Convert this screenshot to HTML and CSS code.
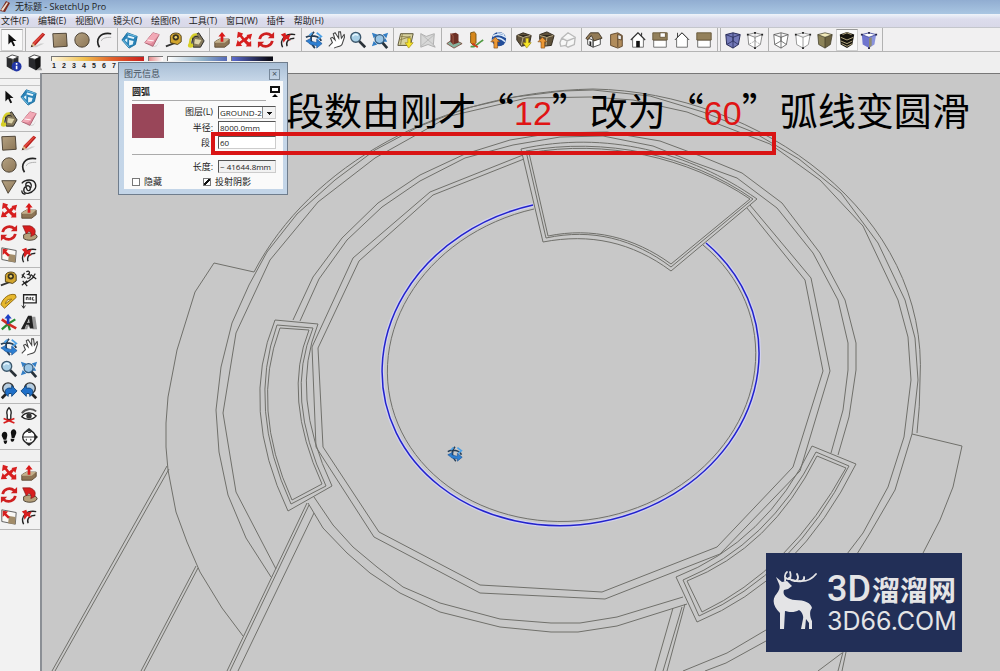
FILE: index.html
```html
<!DOCTYPE html>
<html lang="zh-CN">
<head>
<meta charset="utf-8">
<title>无标题 - SketchUp Pro</title>
<link rel="stylesheet" href="styles.css">
</head>
<body>
<svg class="defs" aria-hidden="true">
  <defs>
    <linearGradient id="skin" x1="0" y1="0" x2="1" y2="1"><stop offset="0" stop-color="#b5a283"/><stop offset="1" stop-color="#8c7656"/></linearGradient>
    <symbol id="i-arrow" viewBox="0 0 20 20"><path d="M6 3v12l3-3 2.500 5 2-1-2.500-5h4z" fill="#111"/></symbol>
    <symbol id="i-pencil" viewBox="0 0 20 20"><path d="M3 18l10-4 4 0-9 4z" fill="#ccc"/><path d="M2 18l2-5L15 2l3 2L7 16z" fill="#b81c1c"/><path d="M4.500 13L15.500 2.500l1 .7L6 15z" fill="#e04a3e"/><path d="M2 18l2-5 3 3z" fill="#dbb583"/><path d="M2 18l1-2.500 1.500 1.500z" fill="#222"/></symbol>
    <symbol id="i-rect" viewBox="0 0 20 20"><path d="M2 3l15-.5 1 14.500-15 1z" fill="url(#skin)" stroke="#443a2c"/></symbol>
    <symbol id="i-circle" viewBox="0 0 20 20"><circle cx="10" cy="10" r="8" fill="url(#skin)" stroke="#443a2c"/></symbol>
    <symbol id="i-arc" viewBox="0 0 20 20"><path d="M5 18C0 10 5 1 18 3" fill="none" stroke="#222" stroke-width="1.800"/><path d="M7 11C8 8 12 7 18 7" fill="none" stroke="#aaa"/></symbol>
    <symbol id="i-poly" viewBox="0 0 20 20"><path d="M2 3h16l-9 14z" fill="url(#skin)" stroke="#443a2c"/></symbol>
    <symbol id="i-free" viewBox="0 0 20 20"><path d="M2 6C6 1 15 1 17 6s-2 10-8 11-6-6-2-8 6 4 3 5-5-8-2-9 6 2 4 6M2 14c0 3 2 4 4 4" fill="none" stroke="#222" stroke-width="1.500"/></symbol>
    <symbol id="i-comp" viewBox="0 0 20 20"><path d="M7 2l11 4-2 9-7 4-8-9z" fill="#2a83b8" stroke="#176b9c"/><path d="M8 5l7 2-1 2-7-2zM4 10l3-2 0 5zM9 10l5 1-1 4-4 1z" fill="#e6f5fb"/><path d="M2 10l7 8M7 3l10 3" stroke="#7cc8ea"/></symbol>
    <symbol id="i-erase" viewBox="0 0 20 20"><path d="M7 18l8-2 4-6-4 7z" fill="#bbb"/><path d="M2 13L11 2l7 2-7 13z" fill="#e08a9b" stroke="#a85c6c"/><path d="M2 13l7 1 9-10-7-2z" fill="#f2a9b6"/><path d="M5 10l7 1" stroke="#fff"/></symbol>
    <symbol id="i-tape" viewBox="0 0 20 20"><path d="M1 17l11-4" stroke="#333" stroke-width="2"/><path d="M6 13V6c1-5 11-5 12 0v6l-4 3z" fill="#d2a52e" stroke="#4a3a12"/><circle cx="12" cy="7" r="3.500" fill="#3b3420"/><circle cx="12" cy="7" r="1.500" fill="#eed36a"/></symbol>
    <symbol id="i-paint" viewBox="0 0 20 20"><path d="M6 6l7-4 6 9-4 7H7z" fill="#85795b" stroke="#222"/><path d="M9 9l7 1-3 5-5-1z" fill="#ddd4aa"/><path d="M3 15C3 7 7 3 11 4" stroke="#d6cf28" stroke-width="2.500" fill="none"/><path d="M5 16C5 8 9 4 13 7" stroke="#222" fill="none"/><ellipse cx="4" cy="16" rx="3" ry="2.500" fill="#d6cf28"/></symbol>
    <symbol id="i-push" viewBox="0 0 20 20"><path d="M2 12l5-3h11v5l-5 4H2z" fill="#8d7454" stroke="#5a4832"/><path d="M2 12l5-3h11l-5 4H2z" fill="#c3b08c"/><path d="M10 1l4 5h-2.500v6h-3V6H6z" fill="#d91a1a"/></symbol>
    <symbol id="i-move" viewBox="0 0 20 20"><path d="M2 2l6 1-1 2 3 3 3-3-1-1 6-2-1 7-2-2-2 3 3 2 2-2 1 6-6 1 1-2-4-3-3 3 2 2-7 1 1-7 2 2 3-3-3-3-3 2z" fill="#d71e1e" transform="rotate(8 10 10)"/></symbol>
    <symbol id="i-rot" viewBox="0 0 20 20"><path d="M3 9c1-6 8-8 13-4M17 11c-1 6-8 8-13 4" fill="none" stroke="#cf2020" stroke-width="3"/><path d="M19 1v7h-7zM1 19v-7h7z" fill="#cf2020"/></symbol>
    <symbol id="i-offset" viewBox="0 0 20 20"><path d="M4 18C0 10 7 2 18 4M9 17c-2-5 2-9 8-9" fill="none" stroke="#222" stroke-width="1.500"/><path d="M2 4l5-2 1 3 5-1-2 4 2 3-5-2-3 4-1-4 1-2z" fill="#d71e1e"/></symbol>
    <symbol id="i-follow" viewBox="0 0 20 20"><path d="M4 12c4-3 14-3 15 2-1 5-12 5-15 2z" fill="#b5a07a" stroke="#443a2c"/><path d="M3 2l8 0c6 2 7 6 5 10l-4 2c1-4 0-5-2-6L7 11z" fill="#d71e1e" stroke="#7c1515" stroke-width=".7"/></symbol>
    <symbol id="i-scale" viewBox="0 0 20 20"><path d="M2 2l16 3-1 13-15-3z" fill="#faf8f5" stroke="#555"/><path d="M10 9l7 1v8l-8-1z" fill="#a28c69"/><path d="M3 3l6 1-2 2 4 4-2 2-4-4-2 2z" fill="#d71e1e"/></symbol>
    <symbol id="i-orbit" viewBox="0 0 20 20"><path d="M10 1c-5 5-4 13 1 18M1 7c5-3 15-2 17 4" fill="none" stroke="#263d55" stroke-width="2"/><path d="M1 11l6-3-1 3 7 2V9l6 5-6 5v-3c-5 0-8-1-9-3z" fill="#2d7fd2" stroke="#164e91" stroke-width=".7"/><path d="M13 2l5 4-4 3M5 5l3-3" fill="none" stroke="#4da1e7" stroke-width="2"/></symbol>
    <symbol id="i-pan" viewBox="0 0 20 20"><path d="M2 17l4-4-2-5 2-1 3 3-2-7 2-1 4 6 0-7 2 0 1 7 3-4 1 1-3 9c-1 4-6 3-9 5" fill="#fff" stroke="#444" stroke-width="1.200"/></symbol>
    <symbol id="i-zoom" viewBox="0 0 20 20"><path d="M11 11l7 7" stroke="#2a3138" stroke-width="3"/><circle cx="7.500" cy="7" r="5.500" fill="#a8cfe6" stroke="#3c576c" stroke-width="1.500"/><path d="M4 6c1-2 4-3 6-1" stroke="#e8f7ff" stroke-width="1.500" fill="none"/></symbol>
    <symbol id="i-zoomall" viewBox="0 0 20 20"><path d="M1 2l6 2-4 4zM19 2l-6 2 4 4zM1 17l2-6 4 4zM18 12l-2-4-3 4z" fill="#347fc6"/><path d="M12 12l6 7" stroke="#28323a" stroke-width="3"/><circle cx="9.500" cy="9" r="5" fill="#9bc6e6" stroke="#315b80" stroke-width="1.500"/></symbol>
    <symbol id="i-prev" viewBox="0 0 20 20"><path d="M12 12l6 6" stroke="#222" stroke-width="3"/><circle cx="11" cy="7" r="6" fill="#b8cee0" stroke="#333" stroke-width="1.500"/><path d="M1 10l6-6v3c5-1 8 1 7 6l-3 3c0-3-1-4-4-3v3z" fill="#1f6fc8" stroke="#12477f"/></symbol>
    <symbol id="i-map" viewBox="0 0 20 20"><path d="M4 3h14l-3 13H1z" fill="#d8d29f" stroke="#514b2e"/><path d="M4 6l11 1M3 10l12-4M6 3l-2 12" stroke="#8a7e4c"/><path d="M12 8h3v5h3l-5 6-4-6h3z" fill="#f6e427" stroke="#a28b12" stroke-width=".7"/></symbol>
    <symbol id="i-terrain" viewBox="0 0 20 20"><path d="M2 3l6 3 9-3-1 12 2 3-8-3-8 3z" fill="#d7d7d7" stroke="#aaa"/><path d="M2 3l15 13M2 17L17 4" stroke="#b8b8b8"/></symbol>
    <symbol id="i-model" viewBox="0 0 20 20"><path d="M2 14l7-5 10 5-9 5z" fill="#87b4a0" stroke="#7b4f41"/><path d="M6 3l6-1 3 2v9l-6 2-3-3z" fill="#6d3026"/><path d="M6 3l3 2v10" stroke="#a55e48" fill="none"/></symbol>
    <symbol id="i-person" viewBox="0 0 20 20"><path d="M4 17c5 2 7-3 14-7" fill="none" stroke="#519a43" stroke-width="2"/><path d="M4 5V2l4-1 2 2v10l-3 3-3-3z" fill="#d6861c" stroke="#76510f"/><path d="M6 14l6 4" stroke="#d13a1c" stroke-width="2"/></symbol>
    <symbol id="i-earth" viewBox="0 0 20 20"><circle cx="11" cy="9" r="8" fill="#244e9a"/><path d="M4 6c5-4 10-2 15 1M4 10c5-4 10-2 14 2M9 2c4 0 7 1 8 3" stroke="#dceafa" stroke-width="1.500" fill="none"/><path d="M7 7l5 5H9.500v7h-4v-7H2z" fill="#ed9834" stroke="#854b15" stroke-width=".7"/></symbol>
    <symbol id="i-getbox" viewBox="0 0 20 20"><path d="M2 5l7-3 9 3-2 10-9 2-5-7z" fill="#5f513a" stroke="#2b2418"/><path d="M3 5l6 2 8-2M9 7l-2 9" stroke="#c9b98e"/><path d="M12 8h3v5h3l-5 6-4-6h3z" fill="#f6e427" stroke="#a28b12" stroke-width=".7"/></symbol>
    <symbol id="i-putbox" viewBox="0 0 20 20"><path d="M3 4l8-3 8 4-3 11-9 1-4-8z" fill="#5f513a" stroke="#2b2418"/><path d="M3 5l8 2 7-2M11 7l-1 9" stroke="#c9b98e"/><path d="M6 7l5 5H8.500v7h-4v-7H1z" fill="#ed9834" stroke="#854b15" stroke-width=".7"/></symbol>
    <symbol id="i-ghost" viewBox="0 0 20 20"><path d="M3 8l7-6 8 5-1 8-7 3-3-2-5 1-1-4zM3 8l6 3 8-3M9 11l-1 5" fill="#f7f7f7" stroke="#b9b9b9" stroke-width="1.500"/></symbol>
    <symbol id="i-iso" viewBox="0 0 20 20"><path d="M3 8l6 2v8l-6-3zM9 10l8-3v8l-8 3z" fill="#fff" stroke="#444"/><path d="M1 8l5-6 9 0 4 6-9 3-3-6-4 5z" fill="#927a55" stroke="#3d3325"/><path d="M5 11l2 1v5l-2-1z" fill="#222"/></symbol>
    <symbol id="i-top" viewBox="0 0 20 20"><path d="M4 4l8-2 5 3v12l-5 2-8-3z" fill="#b18c5c" stroke="#5c452a"/><path d="M12 3v15" stroke="#5c452a"/><path d="M12 4l4 1v5l-4-1z" fill="#eee" stroke="#5c452a"/></symbol>
    <symbol id="i-front" viewBox="0 0 20 20"><path d="M4 8v10h12V8l-6-6z" fill="#fff" stroke="#666"/><path d="M2 10l8-8 8 8M14 5V2" fill="none" stroke="#333" stroke-width="1.200"/><path d="M8 11h4v7H8z" fill="#111"/></symbol>
    <symbol id="i-side" viewBox="0 0 20 20"><path d="M3 10h14v8H3z" fill="#fff" stroke="#666"/><path d="M2 2h16v8H2z" fill="#93805b" stroke="#665639"/><path d="M10 2h6v5h-6z" fill="#fff" stroke="#665639"/></symbol>
    <symbol id="i-back" viewBox="0 0 20 20"><path d="M4 8v10h12V8l-6-6z" fill="#fff" stroke="#666"/><path d="M2 10l8-8 8 8M5 7V2" fill="none" stroke="#333"/></symbol>
    <symbol id="i-left" viewBox="0 0 20 20"><path d="M3 10h14v8H3z" fill="#fff" stroke="#666"/><path d="M2 2h16v8H2z" fill="#93805b" stroke="#665639"/></symbol>
    <symbol id="i-xray" viewBox="0 0 20 20"><path d="M2 4l8-2 8 2-2 11-6 4-7-4z" fill="#7379b8" stroke="#20244f"/><path d="M2 4l8 3 8-3M10 7v12M3 15l7-4 6 4M10 2v9" fill="none" stroke="#20244f" stroke-width=".8"/></symbol>
    <symbol id="i-dash" viewBox="0 0 20 20"><path d="M2 4l8-2 8 2-2 11-6 4-7-4zM2 4l8 3 8-3M10 7v12" fill="#fff" stroke="#666" stroke-width=".8"/><path d="M3 15l7-4 6 4M10 2v9" fill="none" stroke="#888" stroke-dasharray="1 1"/><path d="M1 3h2v2H1zM9 1h2v2H9zM17 3h2v2h-2zM9 18h2v2H9z" fill="#222"/></symbol>
    <symbol id="i-wire" viewBox="0 0 20 20"><path d="M2 4l8-2 8 2-2 11-6 4-7-4zM2 4l8 3 8-3M10 7v12M3 15l7-4 6 4M10 2v9" fill="#fff" stroke="#444" stroke-width=".8"/></symbol>
    <symbol id="i-hidden" viewBox="0 0 20 20"><path d="M2 4l8-2 8 2-2 11-6 4-7-4zM2 4l8 3 8-3M10 7v12" fill="#fff" stroke="#777" stroke-width=".8"/><path d="M1 3h2v2H1zM9 1h2v2H9zM17 3h2v2h-2zM9 18h2v2H9z" fill="#222"/></symbol>
    <symbol id="i-shade" viewBox="0 0 20 20"><path d="M2 4l8 3v12l-7-4z" fill="#8c8358"/><path d="M10 7l8-3-2 11-6 4z" fill="#6c6341"/><path d="M2 4l8-2 8 2-8 3z" fill="#f1eabb"/><path d="M2 4l8-2 8 2-2 11-6 4-7-4zM2 4l8 3 8-3M10 7v12" fill="none" stroke="#3e3924" stroke-width=".8"/></symbol>
    <symbol id="i-tex" viewBox="0 0 20 20"><path d="M2 4l8-3 8 3-2 11-6 4-7-4z" fill="#15130e"/><path d="M3 7l7 3 7-3M3 11l7 3 6-3M4 14l6 3 6-3M5 4l5-2 5 2" fill="none" stroke="#c1b388"/></symbol>
    <symbol id="i-mono" viewBox="0 0 20 20"><path d="M2 4l8 3v12l-7-4z" fill="#6f75ce"/><path d="M10 7l8-3-2 11-6 4z" fill="#8a93dd"/><path d="M10 8l3-1v9l-3 3z" fill="#8f8c70"/><path d="M2 4l8-2 8 2-8 3z" fill="#fff" stroke="#4850a0"/><path d="M1 3h2v2H1zM9 1h2v2H9zM17 3h2v2h-2zM9 18h2v2H9z" fill="#224"/></symbol>
    <symbol id="i-shadowinfo" viewBox="0 0 20 20"><path d="M3 4l6-3 7 2v11l-6 4-7-4z" fill="#292a2d"/><path d="M3 4l6-3 7 2-6 3z" fill="#fff" stroke="#444"/><path d="M10 6v12" stroke="#777"/><circle cx="14" cy="14" r="5.500" fill="#2236a6"/><path d="M14 13v4M14 10v2" stroke="#fff" stroke-width="1.800"/></symbol>
    <symbol id="i-shadow" viewBox="0 0 20 20"><path d="M10 18l8 0-2-4z" fill="#999"/><path d="M3 4l6-3 7 2v11l-5 4-8-4z" fill="#292a2d"/><path d="M3 4l6-3 7 2-6 3z" fill="#fff" stroke="#444"/><path d="M10 6l6-3v11l-5 4z" fill="#111"/></symbol>
    <symbol id="i-dim" viewBox="0 0 20 20"><path d="M7 2c3-2 5 1 2 3 4 0 3 5-1 4M2 5l4 4M5 3L2 9M12 5l6 5M17 4l-4 6M3 12l5 6M8 12l-6 5M6 15l9-7" fill="none" stroke="#222" stroke-width="1.300"/></symbol>
    <symbol id="i-prot" viewBox="0 0 20 20"><path d="M1 14C3 7 10 1 17 3l1 3L5 18z" fill="#e7b82d" stroke="#8a6510"/><path d="M6 13c1-4 3-5 7-5z" fill="#fff4c5" stroke="#8a6510"/></symbol>
    <symbol id="i-text" viewBox="0 0 20 20"><path d="M4 3h14v9H4z" fill="#fff" stroke="#222" stroke-width="1.500"/><path d="M4 12v6M2 15l2 3 2-3M7 9V6h2v3M11 9V6h1v3M15 6h-1v3h2" stroke="#222" fill="none"/></symbol>
    <symbol id="i-axes" viewBox="0 0 20 20"><path d="M9 11l-7 6M9 11l8-5M9 11l2 7" stroke="#268b32" stroke-width="2.500"/><path d="M9 11l9 5M9 11L2 6" stroke="#cf2a22" stroke-width="3"/><path d="M9 11V3" stroke="#1d3fc4" stroke-width="3"/><path d="M5 5l4-5 4 5z" fill="#1d3fc4"/></symbol>
    <symbol id="i-3dtext" viewBox="0 0 20 20"><path d="M5 17L12 3h5l2 14h-5v-3H9l-1 3z" fill="#999"/><path d="M1 17L9 2h4l2 14h-4l-1-4H7l-2 5zm7-7h3l-1-5z" fill="#222"/></symbol>
    <symbol id="i-campos" viewBox="0 0 20 20"><path d="M10 2c-3 3-3 5-2 8v5h4v-5c1-3 0-6-2-8z" fill="#fff" stroke="#222" stroke-width="1.500"/><path d="M4 14l12 5M16 14L4 19" stroke="#d71e1e" stroke-width="1.800"/></symbol>
    <symbol id="i-eye" viewBox="0 0 20 20"><path d="M2 12c3-5 11-6 16-1-4 5-12 5-16 1z" fill="#fff" stroke="#222" stroke-width="1.500"/><circle cx="10" cy="11" r="3" fill="#333"/><path d="M2 8c4-5 11-6 16-2" fill="none" stroke="#555" stroke-width="2"/></symbol>
    <symbol id="i-walk" viewBox="0 0 20 20"><path d="M2 9c-1-6 7-7 6 0l-1 4H4zM4 14h4c0 5-4 5-4 0zM12 5c1-6 7-4 6 1l-2 5h-3zM12 12h4c0 5-5 4-4 0z" fill="#111"/></symbol>
    <symbol id="i-section" viewBox="0 0 20 20"><circle cx="10" cy="10" r="7" fill="#fff" stroke="#222" stroke-width="1.500"/><path d="M10 0l4 3H6zM10 20l4-3H6zM20 10l-4-4v8z" fill="#222"/><path d="M3 10h14M9 5h3M7 14v-2M12 14v-2" stroke="#222"/></symbol>
  </defs>
</svg>

<div class="app">
  <header class="title-bar">
    <svg class="app-logo" viewBox="0 0 12 12" aria-hidden="true"><path d="M0 10L6 0l4 2-5 9z" fill="#7a2a20"/><path d="M1 9l6-8 1 1-5 8z" fill="#f0dfcc"/></svg>
    <span>无标题 - SketchUp Pro</span>
  </header>
  <nav class="menu-bar">
    <button>文件(F)</button><button>编辑(E)</button><button>视图(V)</button><button>镜头(C)</button><button>绘图(R)</button><button>工具(T)</button><button>窗口(W)</button><button>插件</button><button>帮助(H)</button>
  </nav>
  <div class="toolbar">
    <div class="group"><button class="tool on" aria-label="选择"><svg><use href="#i-arrow"/></svg></button></div>
    <div class="group"><button class="tool" aria-label="线条"><svg><use href="#i-pencil"/></svg></button><button class="tool" aria-label="矩形"><svg><use href="#i-rect"/></svg></button><button class="tool" aria-label="圆"><svg><use href="#i-circle"/></svg></button><button class="tool" aria-label="圆弧工具"><svg><use href="#i-arc"/></svg></button></div>
    <div class="group"><button class="tool" aria-label="组件"><svg><use href="#i-comp"/></svg></button><button class="tool" aria-label="擦除"><svg><use href="#i-erase"/></svg></button><button class="tool" aria-label="卷尺"><svg><use href="#i-tape"/></svg></button><button class="tool" aria-label="颜料桶"><svg><use href="#i-paint"/></svg></button></div>
    <div class="group"><button class="tool" aria-label="推拉"><svg><use href="#i-push"/></svg></button><button class="tool" aria-label="移动"><svg><use href="#i-move"/></svg></button><button class="tool" aria-label="旋转"><svg><use href="#i-rot"/></svg></button><button class="tool" aria-label="偏移"><svg><use href="#i-offset"/></svg></button></div>
    <div class="group"><button class="tool" aria-label="环绕观察"><svg><use href="#i-orbit"/></svg></button><button class="tool" aria-label="平移"><svg><use href="#i-pan"/></svg></button><button class="tool" aria-label="缩放"><svg><use href="#i-zoom"/></svg></button><button class="tool" aria-label="充满视窗"><svg><use href="#i-zoomall"/></svg></button></div>
    <div class="group"><button class="tool" aria-label="添加位置"><svg><use href="#i-map"/></svg></button><button class="tool" aria-label="切换地形"><svg><use href="#i-terrain"/></svg></button></div>
    <div class="group"><button class="tool" aria-label="建筑"><svg><use href="#i-model"/></svg></button><button class="tool" aria-label="照片纹理"><svg><use href="#i-person"/></svg></button><button class="tool" aria-label="预览模型"><svg><use href="#i-earth"/></svg></button></div>
    <div class="group"><button class="tool" aria-label="获取模型"><svg><use href="#i-getbox"/></svg></button><button class="tool" aria-label="共享模型"><svg><use href="#i-putbox"/></svg></button><button class="tool" aria-label="共享组件"><svg><use href="#i-ghost"/></svg></button></div>
    <div class="group"><button class="tool" aria-label="等轴"><svg><use href="#i-iso"/></svg></button><button class="tool" aria-label="俯视图"><svg><use href="#i-top"/></svg></button><button class="tool" aria-label="前视图"><svg><use href="#i-front"/></svg></button><button class="tool" aria-label="右视图"><svg><use href="#i-side"/></svg></button><button class="tool" aria-label="后视图"><svg><use href="#i-back"/></svg></button><button class="tool" aria-label="左视图"><svg><use href="#i-left"/></svg></button></div>
    <div class="group first"><button class="tool" aria-label="X 射线"><svg><use href="#i-xray"/></svg></button><button class="tool" aria-label="后边线"><svg><use href="#i-dash"/></svg></button></div>
    <div class="group"><button class="tool" aria-label="线框"><svg><use href="#i-wire"/></svg></button><button class="tool" aria-label="消隐"><svg><use href="#i-hidden"/></svg></button><button class="tool" aria-label="阴影"><svg><use href="#i-shade"/></svg></button><button class="tool on" aria-label="阴影纹理"><svg><use href="#i-tex"/></svg></button><button class="tool" aria-label="单色"><svg><use href="#i-mono"/></svg></button></div>
  </div>
  <div class="shadow-bar">
    <button class="tool" aria-label="阴影设置"><svg><use href="#i-shadowinfo"/></svg></button><button class="tool" aria-label="显示阴影"><svg><use href="#i-shadow"/></svg></button>
    <div class="months"><div class="ramp warm"></div><div class="digits"><span>1</span><span>2</span><span>3</span><span>4</span><span>5</span><span>6</span><span>7</span></div></div>
    <div class="ramp pink"></div><div class="ramp sky"></div><div class="ramp night"></div>
  </div>

  <main class="work">
    <aside class="side">
      <div class="grip"></div>
      <div class="pair"><button class="tool" aria-label="选择"><svg><use href="#i-arrow"/></svg></button><button class="tool" aria-label="组件"><svg><use href="#i-comp"/></svg></button><button class="tool" aria-label="颜料桶"><svg><use href="#i-paint"/></svg></button><button class="tool" aria-label="擦除"><svg><use href="#i-erase"/></svg></button></div>
      <div class="pair"><button class="tool" aria-label="矩形"><svg><use href="#i-rect"/></svg></button><button class="tool" aria-label="线条"><svg><use href="#i-pencil"/></svg></button><button class="tool" aria-label="圆"><svg><use href="#i-circle"/></svg></button><button class="tool" aria-label="圆弧工具"><svg><use href="#i-arc"/></svg></button><button class="tool" aria-label="多边形"><svg><use href="#i-poly"/></svg></button><button class="tool" aria-label="徒手画"><svg><use href="#i-free"/></svg></button></div>
      <div class="pair"><button class="tool" aria-label="移动"><svg><use href="#i-move"/></svg></button><button class="tool" aria-label="推拉"><svg><use href="#i-push"/></svg></button><button class="tool" aria-label="旋转"><svg><use href="#i-rot"/></svg></button><button class="tool" aria-label="路径跟随"><svg><use href="#i-follow"/></svg></button><button class="tool" aria-label="拉伸"><svg><use href="#i-scale"/></svg></button><button class="tool" aria-label="偏移"><svg><use href="#i-offset"/></svg></button></div>
      <div class="pair"><button class="tool" aria-label="卷尺"><svg><use href="#i-tape"/></svg></button><button class="tool" aria-label="尺寸"><svg><use href="#i-dim"/></svg></button><button class="tool" aria-label="量角器"><svg><use href="#i-prot"/></svg></button><button class="tool" aria-label="文本"><svg><use href="#i-text"/></svg></button><button class="tool" aria-label="轴"><svg><use href="#i-axes"/></svg></button><button class="tool" aria-label="三维文本"><svg><use href="#i-3dtext"/></svg></button></div>
      <div class="pair"><button class="tool" aria-label="环绕观察"><svg><use href="#i-orbit"/></svg></button><button class="tool" aria-label="平移"><svg><use href="#i-pan"/></svg></button><button class="tool" aria-label="缩放"><svg><use href="#i-zoom"/></svg></button><button class="tool" aria-label="充满视窗"><svg><use href="#i-zoomall"/></svg></button><button class="tool flip" aria-label="上一个"><svg><use href="#i-prev"/></svg></button><button class="tool" aria-label="下一个"><svg><use href="#i-prev"/></svg></button></div>
      <div class="pair"><button class="tool" aria-label="定位镜头"><svg><use href="#i-campos"/></svg></button><button class="tool" aria-label="正面观察"><svg><use href="#i-eye"/></svg></button><button class="tool" aria-label="漫游"><svg><use href="#i-walk"/></svg></button><button class="tool" aria-label="截平面"><svg><use href="#i-section"/></svg></button></div>
      <div class="grip low"></div>
      <div class="pair"><button class="tool" aria-label="移动"><svg><use href="#i-move"/></svg></button><button class="tool" aria-label="推拉"><svg><use href="#i-push"/></svg></button><button class="tool" aria-label="旋转"><svg><use href="#i-rot"/></svg></button><button class="tool" aria-label="路径跟随"><svg><use href="#i-follow"/></svg></button><button class="tool" aria-label="拉伸"><svg><use href="#i-scale"/></svg></button><button class="tool" aria-label="偏移"><svg><use href="#i-offset"/></svg></button></div>
    </aside>

    <section class="canvas">
      <svg class="plan" viewBox="42 74 958 597" preserveAspectRatio="xMinYMin slice" role="img" aria-label="平面图">
        <g class="edge">
          <path d="M534 209A185 158 -10.400 1 0 703 245"/>
          <path d="M521 149L543 242C590 233 632 242 671 271L757 199C690 152 605 130 521 149"/>
          <path d="M526 151L546 238C592 228 634 239 671 267L753 199C688 154 605 137 526 151"/>
          <path d="M529 153L548 236C592 227 634 237 671 264L750 199C688 157 605 139 529 153z"/>
          <path d="M523 155L430 192 353 258 312 347 316 447 374 537 480 593 605 599 720 554 800 471 830 371 811 278 750 205"/>
          <path d="M524 159L433 195 359 261 318 348 323 447 379 532 480 585 602 592 717 547 793 467 823 371 805 280 747 208"/>
          <path d="M293 320L313 277 342 238 378 203 420 175 465 154 510 140 553 133 607 132 660 141 703 157 742 173 782 203 820 253 845 300 856 343 856 370 849 417 838 455"/>
          <path d="M300 321L319 279 347 240 382 207 420 181 465 158 513 145 560 137 603 136 653 146 693 162 737 178 777 208 813 253 838 300 848 343 848 370 843 410 831 453"/>
          <path d="M308 503L323 528 347 553 370 573 400 593 440 612 500 627 551 632 578 632 617 626 687 604"/>
          <path d="M314 497L333 525 353 547 377 567 403 587 440 603 500 619 551 623 580 623 617 617 683 597"/>
          <path d="M254 272C310 165 440 92 593 89C760 92 930 215 920 380Q920 407 917 433"/>
          <path d="M271 577L246 538 228 495 219 452 216 410 221 367 232 323 249 285 267 252 297 214 335 180 375 150 420 126 467 108 515 97 563 91 593 90 650 96 703 112 753 132 799 159 841 193 878 243 905 300 915 338 918 380 912 434 895 490 870 533 857 554"/>
          <path d="M276 569L236 492 223 413 236 333 270 260 318 202 375 158 450 116 527 98 590 97 633 100 687 112 770 144 820 180 863 226 898 300 908 337 911 380 904 437 888 487 863 533 847 554"/>
          <path d="M254 272L214 263 195 292 177 350 168 397 166 423 166 447 168 470 176 512 187 542 200 572 222 608 243 636"/>
          <path d="M167 466L52 671M169 469L55 671M196 566L141 671M198 568L144 671M307 503L227 671M309 505L230 671M314 513L238 671"/>
          <path d="M275 320L318 324Q289 395 332 486L288 511Q239 408 275 320z"/>
          <path d="M277 325L313 328Q284 397 326 486L291 504Q247 408 277 325z"/>
          <path d="M280 328L309 330Q282 397 322 484L292 500Q250 408 280 328z"/>
          <path d="M812 446L856 464Q798 581 697 622L676 577Q766 542 812 446z"/>
          <path d="M816 452L849 466Q794 575 699 616L683 580Q769 544 816 452z"/>
          <path d="M817 456L846 468Q790 570 702 612L687 581Q771 548 817 456z"/>
          <path d="M912 434L962 446 953 487 940 520 922 555"/>
          <path d="M766 630L727 653 683 671M766 641L726 663 705 671M842 653L818 671M843 652L838 671M846 652L842 671M673 608L655 671M682 607L663 671M685 604L667 671"/>
        </g>
        <path class="halo" d="M533 205A189.300 162 -10.400 1 0 706 243"/>
        <path class="picked" d="M533 205A189.300 162 -10.400 1 0 706 243"/>
        <svg x="447" y="446" width="16" height="16"><use href="#i-orbit"/></svg>
      </svg>
      <p class="note">段数由刚才“<em>12</em>”改为“<em>60</em>”弧线变圆滑</p>
      <div class="brand">
        <svg class="deer" viewBox="0 0 46 60" aria-hidden="true"><g fill="#e4e4e6"><path d="M3 6L9 11 14 10 19 15 15 18 11 19C9 24 14 28 22 29 32 29 38 32 39 37 36 40 37 47 39 50L39 58H36L36 52 33 48 32 58H28L30 48C31 44 28 40 26 39 21 42 16 41 12 40L11 58H7L7 42C1 36-1 30 2 25 5 21 8 18 6 13z"/></g><path d="M12 10C13 6 10 4 14 1M13 7C18 11 18 4 17 1M16 7C22 13 27 9 24 3M20 9C27 12 32 10 31 6M26 10C34 11 39 8 43 3" fill="none" stroke="#e4e4e6" stroke-width="1.800" stroke-linecap="round"/></svg>
        <div class="brand-text"><div class="brand-name"><span>3D</span><b>溜溜网</b></div><div class="brand-url">3D66.COM</div></div>
      </div>
    </section>
  </main>

  <form class="dialog">
    <div class="dialog-title"><span>图元信息</span><button type="button" aria-label="关闭">×</button></div>
    <div class="dialog-body">
      <div class="dialog-head"><strong>圆弧</strong><button type="button" aria-label="展开"><svg viewBox="0 0 10 12"><path d="M1 1h8v5H1z" fill="#fff" stroke="#111" stroke-width="2"/><path d="M5 8l3 3H2z"/></svg></button></div>
      <div class="fields">
        <div class="swatch"></div>
        <label for="layer">图层(L)</label><select id="layer"><option>GROUND-2</option></select>
        <label for="radius">半径:</label><input id="radius" type="text" value="8000.0mm">
        <label for="segs">段</label><input id="segs" type="text" value="60">
        <hr>
        <label for="len">长度:</label><input id="len" class="len" type="text" value="~ 41644.8mm">
      </div>
      <div class="checks"><label><input type="checkbox">隐藏</label><label><input type="checkbox" checked>投射阴影</label></div>
    </div>
  </form>
  <div class="marker"></div>
</div>
</body>
</html>
```
FILE: styles.css
```css
* { box-sizing: border-box; }
body { margin: 0; font: 9px/12px "Liberation Sans", "Noto Sans CJK SC", sans-serif; color: #222; background: #f0f0f0; }
button, input, select { font: inherit; color: inherit; margin: 0; padding: 0; border: 0; background: none; border-radius: 0; }
.defs { position: absolute; width: 0; height: 0; }
.app { position: relative; display: flex; flex-direction: column; height: 100vh; overflow: hidden; }

.title-bar { display: flex; align-items: center; gap: 3px; height: 14px; flex: none; background: linear-gradient(#91add1, #a9c6e2); font-family: "Open Sans", "Noto Sans CJK SC", sans-serif; }
.app-logo { width: 12px; height: 12px; }
.menu-bar { display: flex; gap: 9px; height: 14px; flex: none; padding: 0 1px; background: linear-gradient(#eef4fa, #dcdcec 40%, #d8d8e8); border-bottom: 1px solid #c4c6cc; font-family: "Open Sans", "Noto Sans CJK SC", sans-serif; }
.menu-bar button { white-space: nowrap; }

.toolbar { display: flex; height: 24px; flex: none; border-bottom: 1px solid #b4b4b4; background: #f1f0f1; }
.group { display: flex; flex: none; padding: 1px 2px 1px 1px; border-right: 1px solid #b2b2b2; }
.group.first { margin-left: 2px; border-left: 1px solid #b2b2b2; }
.tool { display: flex; align-items: center; justify-content: center; width: 22px; height: 22px; flex: none; }
.tool svg { width: 18px; height: 18px; flex: none; }
.tool.on { background: #f9f9f9; border: 1px solid #d0d0d0; border-top-color: #999; }
.shadow-bar { display: flex; height: 21px; flex: none; padding-left: 2px; background: #efefef; }
.shadow-bar > .ramp { margin: 4px 4px 0 0; }
.months { width: 93px; margin: 4px 4px 0 5px; }
.ramp { height: 5px; border-top: 1px solid #777; border-left: 1px solid #777; }
.warm { background: linear-gradient(90deg, #fff7e0, #f1c14f 35%, #e2622c 65%, #c9201f); }
.pink { width: 15px; background: linear-gradient(90deg, #e58a8a, #fff); }
.sky { width: 60px; background: linear-gradient(90deg, #fff, #8fb1c8 60%, #5569b8); }
.night { width: 42px; background: linear-gradient(90deg, #5c6cd0, #0c0c18 90%); }
.digits { display: flex; padding-left: 1px; font: bold 7px/10px "Liberation Sans", sans-serif; }
.digits span { width: 10px; }

.work { display: flex; flex: 1; min-height: 0; }
.side { width: 42px; flex: none; border-right: 2px solid #8b8f95; background: #f2f2f2; }
.grip { height: 13px; border-bottom: 1px solid #c4c4c4; background: linear-gradient(#f0f0f0 5px, #bbb 5px 6px, #f2f2f2 6px); }
.grip.low { height: 12px; background: #f0f0f0; }
.pair { display: grid; grid-template-columns: 17px 23px; padding-bottom: 1px; border-bottom: 1px solid #b8b8b8; }
.side .tool { width: auto; }
.side .tool.on { border: 0; }
.flip svg { transform: scaleX(-1); }

.canvas { position: relative; flex: 1; min-width: 0; background: #c8c8c8; border-top: 1px solid #777; overflow: hidden; }
.plan { display: block; width: 100%; height: 100%; }
.edge { fill: none; stroke: #70706b; stroke-width: 1; }
.halo { fill: none; stroke: #d2d2ee; stroke-width: 4; }
.picked { fill: none; stroke: #2222cc; stroke-width: 1.500; }
.note { position: absolute; left: 244px; top: 8px; margin: 0; white-space: nowrap; color: #000; font: 38px/54px "Noto Sans CJK SC", sans-serif; }
.note em { font: 34px/54px "Liberation Sans", sans-serif; color: #e01414; }
.marker { position: absolute; left: 211px; top: 132px; width: 565px; height: 23px; border: 4px solid #d91414; pointer-events: none; }

.brand { position: absolute; left: 724px; top: 479px; display: flex; gap: 8px; width: 196px; height: 99px; padding: 18px 6px 0 7px; background: #222f57; color: #e4e4e6; }
.deer { width: 46px; height: 60px; flex: none; }
.brand-name { display: flex; align-items: center; height: 36px; gap: 1px; white-space: nowrap; }
.brand-name span { font: 500 36px/36px Roboto, sans-serif; }
.brand-name b { font: 700 28px/36px "Noto Sans CJK SC", sans-serif; }
.brand-url { margin-top: 2px; font: 25px/24px Inter, sans-serif; }

.dialog { position: absolute; left: 118px; top: 62px; width: 170px; padding: 0 4px 5px 5px; border: 1px solid #6f7d8d; background: linear-gradient(#a9bfd6, #c7d7e8 14%, #c3d5e8); font-family: "Open Sans", "Noto Sans CJK SC", sans-serif; }
.dialog-title { display: flex; justify-content: space-between; align-items: center; height: 18px; padding-top: 4px; color: #44505c; }
.dialog-title button { width: 11px; height: 11px; margin-right: 3px; border: 1px solid #77889a; font-size: 9px; line-height: 8px; }
.dialog-body { padding: 2px 7px 0 8px; background: #fafafa; }
.dialog-head { display: flex; justify-content: space-between; height: 18px; margin-right: -4px; align-items: center; }
.dialog-head strong { flex: 1; border-bottom: 1px solid #aaa; line-height: 16px; margin-right: 4px; }
.dialog-head button { width: 10px; height: 14px; }
.dialog-head svg { display: block; width: 10px; height: 12px; }
.fields { display: grid; grid-template-columns: 32px 1fr 58px; column-gap: 5px; grid-template-rows: 16px 15px 15px 9px 15px; padding-top: 3px; align-items: center; }
.fields label { grid-column: 2; justify-self: end; white-space: nowrap; }
.fields label[for="segs"] { padding-right: 3px; }
.fields input, .fields select { grid-column: 3; width: 58px; height: 13px; padding: 0 1px; border: 1px solid #ccc; border-top-color: #555; border-left-color: #555; background: #fff; font-size: 8px; line-height: 11px; }
.fields select { appearance: none; background: linear-gradient(135deg, #111 50%, transparent 50%) 50px 5px / 3px 3px no-repeat, linear-gradient(225deg, #111 50%, transparent 50%) 47px 5px / 3px 3px no-repeat, linear-gradient(90deg, #fff 43px, #888 43px 44px, #f2f2f2 44px); }
.fields .len { background: #f2f2f2; }
.swatch { grid-column: 1; grid-row: 1 / 4; align-self: start; height: 34px; background: #994659; }
.fields hr { grid-column: 1 / 3; width: 100%; margin: 0; border: 0; border-top: 1px solid #aaa; }
.checks { display: flex; gap: 41px; height: 15px; align-items: center; white-space: nowrap; }
.checks label { display: flex; align-items: center; gap: 4px; }
.checks input { appearance: none; width: 8px; height: 8px; border: 1px solid #777; background: #fff; }
.checks input:checked { background: linear-gradient(135deg, transparent 40%, #111 40% 65%, transparent 65%), #fff; }
```
